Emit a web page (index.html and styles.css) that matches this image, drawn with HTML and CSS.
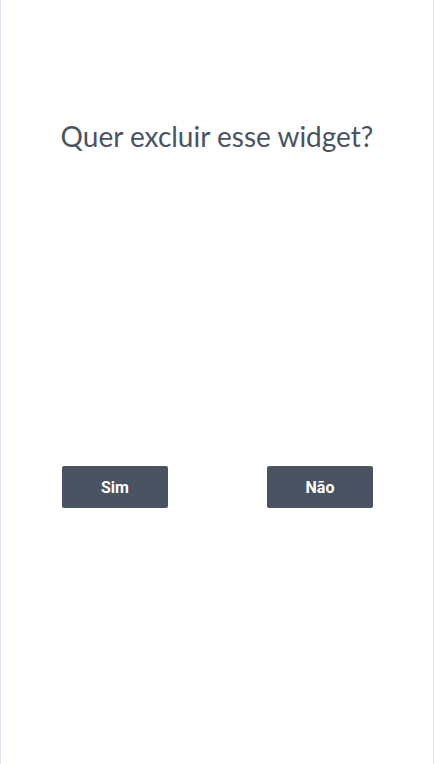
FILE: index.html
```html
<!DOCTYPE html>
<html lang="pt">
<head>
<meta charset="utf-8">
<link rel="stylesheet" href="styles.css">
</head>
<body>
<div class="frame">
  <h1 class="title">Quer excluir esse widget?</h1>
  <div class="actions">
    <button class="btn">Sim</button>
    <button class="btn">Não</button>
  </div>
</div>
</body>
</html>
```
FILE: styles.css
```css
html, body {
  margin: 0;
  padding: 0;
  background: #ffffff;
}
.frame {
  box-sizing: border-box;
  width: 434px;
  height: 764px;
  border-left: 1px solid #dde2ef;
  border-right: 1px solid #dde2ef;
  display: flex;
  flex-direction: column;
  align-items: stretch;
}
.title {
  margin: 116px 0 0 0;
  font-family: Lato, "Open Sans", sans-serif;
  font-weight: 400;
  font-size: 28px;
  line-height: 40px;
  color: #4a5361;
  text-align: center;
}
.actions {
  margin-top: 310px;
  padding: 0 60px 0 61px;
  display: flex;
  justify-content: space-between;
}
.btn {
  width: 106px;
  height: 42px;
  border: none;
  border-radius: 2px;
  background: #4a5361;
  color: #ffffff;
  font-family: Roboto, "Liberation Sans", sans-serif;
  font-weight: 700;
  font-size: 16px;
  padding: 0;
}
```
